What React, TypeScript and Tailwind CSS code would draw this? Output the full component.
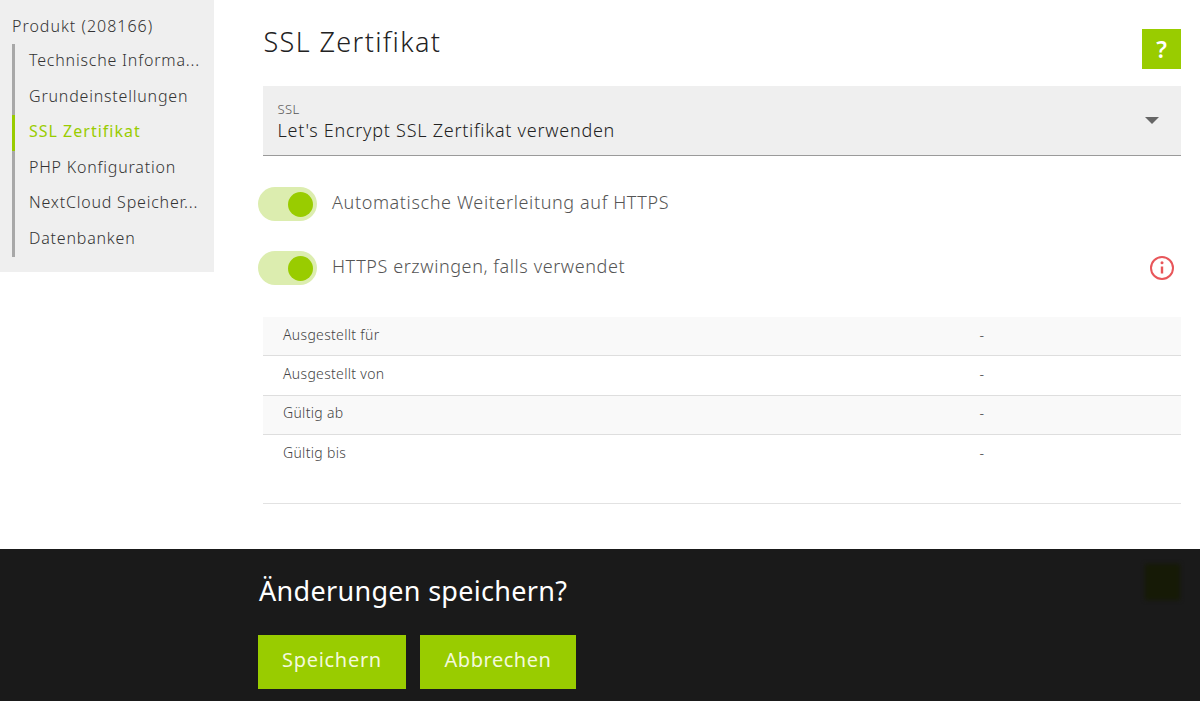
const FONT = "font-['Noto_Sans',sans-serif]";

const NAV_ITEMS = [
  { label: "Technische Informa...", active: false },
  { label: "Grundeinstellungen", active: false },
  { label: "SSL Zertifikat", active: true },
  { label: "PHP Konfiguration", active: false },
  { label: "NextCloud Speicher...", active: false },
  { label: "Datenbanken", active: false },
];

const CERT_ROWS = [
  { label: "Ausgestellt für", striped: true },
  { label: "Ausgestellt von", striped: false },
  { label: "Gültig ab", striped: true },
  { label: "Gültig bis", striped: false },
];

function Toggle() {
  return (
    <span className="flex h-[34px] w-[59px] shrink-0 items-center justify-end rounded-full bg-[#dcedaf] pr-[4px]">
      <span className="h-[25px] w-[25px] rounded-full bg-[#99cc00]" />
    </span>
  );
}

function InfoIcon() {
  return (
    <svg width="26" height="26" viewBox="0 0 26 26" fill="none" stroke="#e8565a" aria-hidden="true">
      <circle cx="13" cy="13" r="11" strokeWidth="2" />
      <path d="M13 11.5v7" strokeWidth="2.4" />
      <circle cx="13" cy="7.8" r="1.5" fill="#e8565a" stroke="none" />
    </svg>
  );
}

export default function App() {
  return (
    <div className={`${FONT} flex h-[701px] w-[1200px] flex-col overflow-hidden bg-white font-light`}>
      <div className="flex min-h-0 flex-1">
        {/* Sidebar */}
        <aside className="h-[272px] w-[214px] shrink-0 bg-[#efefef] pl-[12px] pt-[15px]">
          <div className="text-[16px] leading-[22px] tracking-[1px] text-[#333]">Produkt (208166)</div>
          <ul className="mt-[7px] w-[190px]">
            {NAV_ITEMS.map((item) => (
              <li
                key={item.label}
                className={`h-[35.5px] whitespace-nowrap border-l-[3px] pl-[14px] text-[16px] leading-[33px] ${
                  item.active
                    ? "border-[#99cc00] font-normal tracking-[1px] text-[#99cc00]"
                    : "border-[#a8a8a8] tracking-[0.8px] text-[#333]"
                }`}
              >
                {item.label}
              </li>
            ))}
          </ul>
        </aside>

        {/* Main */}
        <main className="min-w-0 flex-1 pl-[48.5px] pr-[19px]">
          <div className="flex items-start justify-between">
            <h1 className="pl-[1px] pt-[23px] text-[27px] font-light leading-[38px] tracking-[1.38px] text-[#222]">SSL Zertifikat</h1>
            <button className="mt-[29px] flex h-[40px] w-[39px] items-center justify-center bg-[#99cc00] text-[23px] font-semibold text-white">
              ?
            </button>
          </div>

          <div className="mt-[17px] flex h-[70px] items-center justify-between border-b border-[#9a9a9a] bg-[#efefef] pl-[15px] pr-[22px]">
            <div className="pt-[2px]">
              <div className="text-[13px] leading-[16px] tracking-[0.4px] text-[#555]">SSL</div>
              <div className="text-[18px] leading-[26px] tracking-[0.74px] text-[#222]">Let's Encrypt SSL Zertifikat verwenden</div>
            </div>
            <span className="h-0 w-0 border-x-[7px] border-t-[7px] border-x-transparent border-t-[#666]" />
          </div>

          <div className="ml-[-5px] mt-[31px] flex items-center gap-[15.5px]">
            <Toggle />
            <span className="-translate-y-[2px] text-[18px] leading-[32px] tracking-[0.62px] text-[#555]">Automatische Weiterleitung auf HTTPS</span>
          </div>

          <div className="ml-[-5px] mt-[30px] flex items-center gap-[15.5px]">
            <Toggle />
            <span className="flex-1 -translate-y-[2px] text-[18px] leading-[32px] tracking-[0.59px] text-[#555]">HTTPS erzwingen, falls verwendet</span>
            <span className="mr-[6px] -mt-[1px] flex"><InfoIcon /></span>
          </div>

          <div className="mt-[32px] border-b border-[#e2e2e2] pb-[29px]">
            {CERT_ROWS.map((row, i) => (
              <div
                key={row.label}
                className={`flex h-[39.3px] items-center pb-[4px] text-[14px] tracking-[0.32px] text-[#444] ${row.striped ? "bg-[#f9f9f9]" : ""} ${
                  i < CERT_ROWS.length - 1 ? "border-b border-[#dedede]" : ""
                }`}
              >
                <span className="w-[717px] pl-[20.5px]">{row.label}</span>
                <span>-</span>
              </div>
            ))}
          </div>
        </main>
      </div>

      {/* Save bar */}
      <footer className="relative h-[152px] shrink-0 bg-[#1a1a1a] pl-[258px] pt-[23px]">
        <div className="pl-[1px] text-[27px] font-normal leading-[38px] tracking-[0.3px] text-white">Änderungen speichern?</div>
        <div className="mt-[25px] flex gap-[14px]">
          <button className="h-[54px] w-[148px] bg-[#99cc00] pb-[5px] text-[20px] font-normal tracking-[0.7px] text-[#f3f9dc]">Speichern</button>
          <button className="h-[54px] w-[156px] bg-[#99cc00] pb-[5px] text-[20px] font-normal tracking-[0.55px] text-[#f3f9dc]">Abbrechen</button>
        </div>
        {/* help button showing faintly through the bar */}
        <span className="absolute left-[1145px] top-[15px] h-[36px] w-[35px] bg-[#161a06] blur-[2px]" />
      </footer>
    </div>
  );
}
